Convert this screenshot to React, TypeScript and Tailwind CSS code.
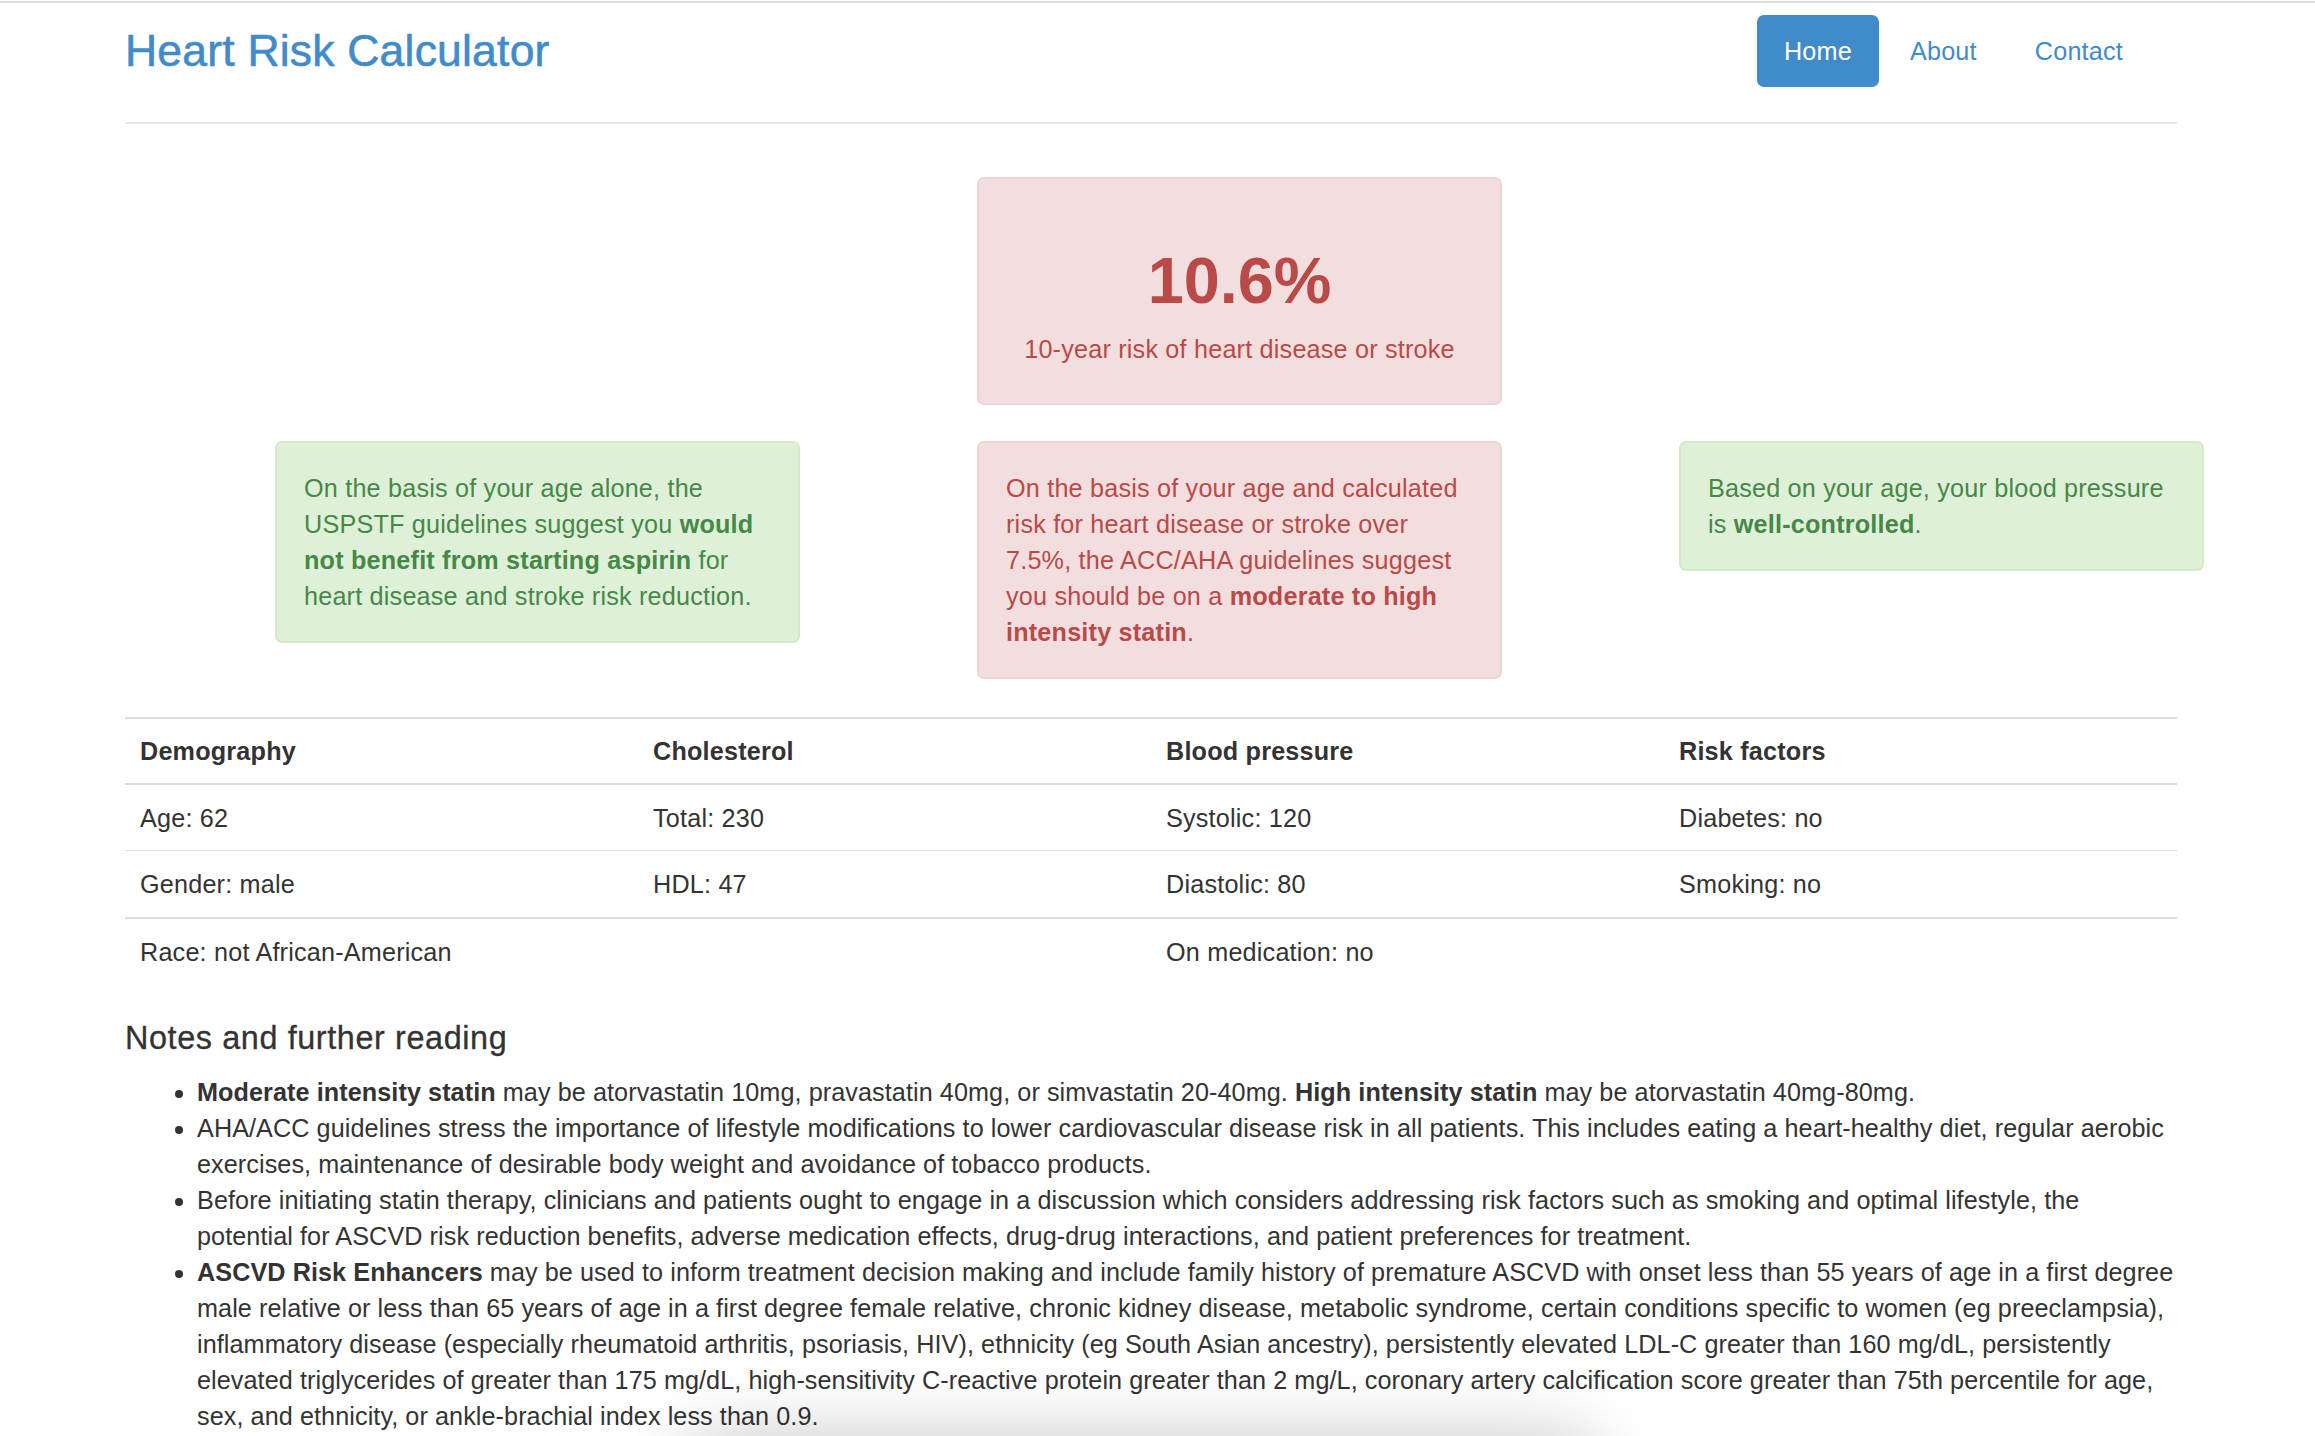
const navLinks = [
  { label: "Home", active: true },
  { label: "About", active: false },
  { label: "Contact", active: false },
];

const rows = [
  {
    border: "border-t-2",
    h: "h-[64px]",
    head: true,
    cells: ["Demography", "Cholesterol", "Blood pressure", "Risk factors"],
  },
  {
    border: "border-t-2",
    h: "h-[65px]",
    head: false,
    cells: ["Age: 62", "Total: 230", "Systolic: 120", "Diabetes: no"],
  },
  {
    border: "border-t",
    h: "h-[66px]",
    head: false,
    cells: ["Gender: male", "HDL: 47", "Diastolic: 80", "Smoking: no"],
  },
  {
    border: "border-t-2",
    h: "h-[65px]",
    head: false,
    cells: ["Race: not African-American", "", "On medication: no", ""],
  },
];

const Header = () => (
  <div className="flex items-start justify-between pt-[12px] pb-[35px] pr-[27px] border-b-2 border-[#e8e8e8]">
    <h3 className="text-[44.5px] leading-[72px] tracking-[0.2px] text-[#428bca] [-webkit-text-stroke:0.6px_#428bca]">
      Heart Risk Calculator
    </h3>
    <nav className="flex gap-[4px]">
      {navLinks.map((l) => (
        <a
          key={l.label}
          href="#"
          className={
            l.active
              ? "px-[27px] h-[72px] leading-[72px] rounded-[7px] bg-[#428bca] text-white"
              : "px-[27px] h-[72px] leading-[72px] rounded-[7px] text-[#428bca]"
          }
        >
          {l.label}
        </a>
      ))}
    </nav>
  </div>
);

const Alert = ({ kind, children }: { kind: "success" | "danger"; children: React.ReactNode }) => (
  <div
    className={
      kind === "success"
        ? "w-[525px] justify-self-end rounded-[7px] border-2 border-[#d6e9c6] bg-[#dff0d8] p-[27px] text-[#468847]"
        : "w-[525px] justify-self-end rounded-[7px] border-2 border-[#eed3d7] bg-[#f2dede] p-[27px] text-[#b94a48]"
    }
  >
    {children}
  </div>
);

export default function App() {
  return (
    <div className="relative h-[1436px] overflow-hidden bg-white font-['Liberation_Sans',Arial,sans-serif] text-[25.2px] leading-[36px] tracking-[0.2px] text-[#333]">
      <div className="mt-[1px] h-[2px] bg-[#dddddd]" />

      <div className="ml-[98px] w-[2106px] px-[27px]">
        <Header />

        {/* headline risk */}
        <div className="-mx-[27px] mt-[53px] grid grid-cols-3">
          <div className="col-start-2 w-[525px] justify-self-end rounded-[7px] border-2 border-[#eed3d7] bg-[#f2dede] pt-[66px] pb-[36px] text-center text-[#b94a48]">
            <h1 className="text-[64.8px] leading-[71px] tracking-normal font-bold">10.6%</h1>
            <p className="mt-[15px]">10-year risk of heart disease or stroke</p>
          </div>
        </div>

        <div className="-mx-[27px] mt-[36px] grid grid-cols-3 items-start">
          <Alert kind="success">
            On the basis of your age alone, the USPSTF guidelines suggest you{" "}
            <b>would not benefit from starting aspirin</b> for heart disease and stroke risk reduction.
          </Alert>
          <Alert kind="danger">
            On the basis of your age and calculated risk for heart disease or stroke over 7.5%, the ACC/AHA
            guidelines suggest you should be on a <b>moderate to high intensity statin</b>.
          </Alert>
          <Alert kind="success">
            Based on your age, your blood pressure is <b>well-controlled</b>.
          </Alert>
        </div>

        {/* inputs table */}
        <div className="mt-[38px]">
          {rows.map((r, i) => (
            <div key={i} className={`grid grid-cols-4 border-[#dddddd] ${r.border}`}>
              {r.cells.map((c, j) => (
                <div key={j} className={`flex items-center px-[15px] ${r.h} ${r.head ? "font-bold" : ""}`}>
                  {c}
                </div>
              ))}
            </div>
          ))}
        </div>

        <h4 className="mt-[36px] text-[32.4px] leading-[36px] tracking-[0.6px] [-webkit-text-stroke:0.3px_#333]">
          Notes and further reading
        </h4>
        <ul className="mt-[18px] list-disc pl-[72px] tracking-[0.08px]">
          <li>
            <b>Moderate intensity statin</b> may be atorvastatin 10mg, pravastatin 40mg, or simvastatin 20-40mg.{" "}
            <b>High intensity statin</b> may be atorvastatin 40mg-80mg.
          </li>
          <li>
            AHA/ACC guidelines stress the importance of lifestyle modifications to lower cardiovascular disease risk
            in all patients. This includes eating a heart-healthy diet, regular aerobic exercises, maintenance of
            desirable body weight and avoidance of tobacco products.
          </li>
          <li>
            Before initiating statin therapy, clinicians and patients ought to engage in a discussion which considers
            addressing risk factors such as smoking and optimal lifestyle, the potential for ASCVD risk reduction
            benefits, adverse medication effects, drug-drug interactions, and patient preferences for treatment.
          </li>
          <li>
            <b>ASCVD Risk Enhancers</b> may be used to inform treatment decision making and include family history of
            premature ASCVD with onset less than 55 years of age in a first degree male relative or less than 65 years
            of age in a first degree female relative, chronic kidney disease, metabolic syndrome, certain conditions
            specific to women (eg preeclampsia), inflammatory disease (especially rheumatoid arthritis, psoriasis,
            HIV), ethnicity (eg South Asian ancestry), persistently elevated LDL-C greater than 160 mg/dL,
            persistently elevated triglycerides of greater than 175 mg/dL, high-sensitivity C-reactive protein greater
            than 2 mg/L, coronary artery calcification score greater than 75th percentile for age, sex, and
            ethnicity, or ankle-brachial index less than 0.9.
          </li>
        </ul>
      </div>

      {/* soft shadow peeking in from below the fold */}
      <div className="absolute left-[680px] top-[1436px] h-[120px] w-[920px] rounded-[40px] bg-white shadow-[0_0_70px_rgba(0,0,0,0.22)]" />
    </div>
  );
}
